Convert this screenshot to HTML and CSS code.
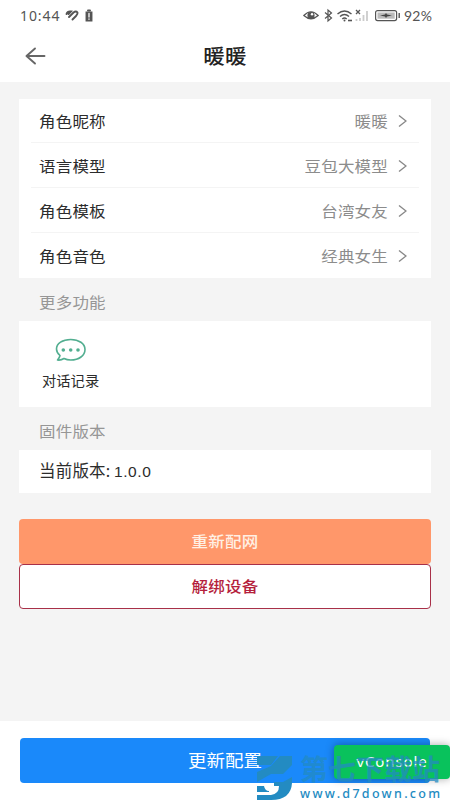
FILE: index.html
```html
<!DOCTYPE html>
<html lang="zh-CN">
<head>
<meta charset="utf-8">
<title>暖暖</title>
<link rel="stylesheet" href="styles.css">
</head>
<body>
<div class="status">
  <span class="time">10:44</span>
  <svg class="s-left" width="32" height="14" viewBox="0 0 32 14" fill="none" stroke="#555" stroke-width="1.9" stroke-linecap="round"><path d="M1.500 5Q2.500 2 6 2.500L3.500 5M4 8L8.500 3.500Q11 1.500 12.500 3.500Q13 5 11 7L7.500 10.500"/><path d="M21.500 3.500h5v8h-5z" fill="#555"/><path d="M23 1.500h2" stroke-width="2"/><path d="M24 4.500v3.500M24 10v.3" stroke="#fff" stroke-width="1.300"/></svg>
  <svg class="s-right" width="98" height="16" viewBox="0 0 98 16" fill="none" stroke="#555" stroke-width="1.200">
    <path d="M.8 7.500Q8 0 15.200 7.500Q8 14 .8 7.500Z"/><circle cx="8" cy="7.500" r="3" fill="#555"/><circle cx="9" cy="6.300" r="1.200" fill="#fff" stroke="none"/>
    <path d="M22 4.500l6.500 5.500-3.500 3V2l3.500 3L22 10.500"/>
    <path d="M34.500 6q7-6 14 0M37 8.500q4.500-4 9 0M39.300 11q2.200-2 4.400 0" stroke-width="1.400"/><circle cx="41.500" cy="12.500" r="1" fill="#555" stroke="none"/><path d="M45 12.500h4" stroke-width="1.600"/>
    <path d="M53 2l4 4M57 2l-4 4" stroke-width="1.300"/><path d="M53.500 13v-2M57 13v-3M60.500 13V7M64 13V3" stroke="#ccc" stroke-width="1.800"/>
    <rect x="72.600" y="2.600" width="21" height="10" rx="2"/><rect x="74.500" y="4.500" width="17.200" height="6.200" fill="#bbb" stroke="none"/><path d="M77 7.600l5-1 1-1.500 1 1.500 5 1-5 1-1 1.500-1-1.500z" fill="#444" stroke="none"/><path d="M96.200 5v5" stroke-width="1.400"/>
  </svg>
  <span class="pct">92%</span>
</div>
<header class="nav">
  <svg class="back" width="22" height="18" viewBox="0 0 22 18" fill="none" stroke="#666" stroke-width="1.900" stroke-linecap="round" stroke-linejoin="round"><path d="M19.500 9H1.500M10 1.500L1.500 9l8.500 7.500"/></svg>
  <h1>暖暖</h1>
</header>
<main>
  <section class="card list">
    <div class="row"><span>角色昵称</span><span class="value">暖暖</span><svg class="chev" viewBox="0 0 9 14"><path d="M1 1.500L8 7l-7 5.500"/></svg></div>
    <div class="row"><span>语言模型</span><span class="value">豆包大模型</span><svg class="chev" viewBox="0 0 9 14"><path d="M1 1.500L8 7l-7 5.500"/></svg></div>
    <div class="row"><span>角色模板</span><span class="value">台湾女友</span><svg class="chev" viewBox="0 0 9 14"><path d="M1 1.500L8 7l-7 5.500"/></svg></div>
    <div class="row"><span>角色音色</span><span class="value">经典女生</span><svg class="chev" viewBox="0 0 9 14"><path d="M1 1.500L8 7l-7 5.500"/></svg></div>
  </section>
  <h2>更多功能</h2>
  <section class="card features">
    <div class="feature">
      <svg width="32" height="24" viewBox="0 0 32 24"><path d="M5 17.500Q1.500 14.500 1.500 11C1.500 5.500 7.500 1.500 15.700 1.500S30 5.500 30 11.500 24 22 15.700 22Q12 22 9 20.500Q6 22.500 2.500 22Q4.500 20 5 17.500Z" fill="none" stroke="#52ae90" stroke-width="1.600" stroke-linejoin="round"/><g fill="#52ae90"><circle cx="8.300" cy="12" r="1.800"/><circle cx="15.700" cy="12" r="1.800"/><circle cx="23" cy="12" r="1.800"/></g></svg>
      <span>对话记录</span>
    </div>
  </section>
  <h2>固件版本</h2>
  <section class="card version">当前版本: <span class="num">1.0.0</span></section>
  <div class="btn net"><span>重新配网</span></div>
  <div class="btn unbind"><span>解绑设备</span></div>
</main>
<footer>
  <div class="btn update"><span>更新配置</span></div>
</footer>
<div class="vconsole">vConsole</div>
<div class="mark">
  <svg class="logo" width="46" height="47" viewBox="0 0 46 47"><path d="M0 3h21l-7 9H0zM14 13l9-10h12v9l-9 9H14L0 29V19zM0 33h7q1 5 5 5v1H0zM17 29h9l9-5v6q-1 17-21 17H0v-5h14q8-1 8-9h-5z" fill="#238bc2"/></svg>
  <div class="mark-text"><span class="mark-name">第七下载站</span><span class="mark-url">www.d7down.com</span></div>
</div>
</body>
</html>
```

FILE: styles.css
```css
* { box-sizing: border-box; }
body { margin: 0; width: 450px; height: 800px; overflow: hidden; position: relative; display: flex; flex-direction: column; background: #f4f4f4; color: #2c2c2c; font: 16.5px/24px "Noto Sans", "Noto Sans CJK SC", sans-serif; letter-spacing: .2px; }
svg { display: block; flex: none; }
.status { height: 32px; flex: none; background: #fff; display: flex; align-items: center; padding: 0 17px 0 20px; color: #555; letter-spacing: 0; }
.time { width: 42px; font: 14px/32px "Noto Sans", sans-serif; letter-spacing: .9px; }
.s-left { margin-left: 3px; }
.s-right { margin-left: auto; }
.pct { width: 29px; margin-left: 3px; font: 14px/32px Lato, sans-serif; letter-spacing: .2px; }
.nav { height: 50px; flex: none; background: #fff; display: flex; align-items: center; padding: 0 25px 2px; }
.nav h1 { flex: 1; margin: 2px 22px 0 0; text-align: center; font-size: 21.5px; font-weight: 500; line-height: 32px; color: #222; transform: scaleY(.93); }
main { flex: 1; padding: 17px 19px 0; }
.card { background: #fff; }
.list { height: 179px; }
.row { display: flex; align-items: center; height: 45px; margin: 0 12px; padding: 1px 12px 0 8px; border-bottom: 1px solid #f4f4f4; }
.row:first-child { height: 44px; }
.row:last-child { border: 0; }
.row span, .feature span, .btn span { transform: scaleY(.92); }
.value { margin-left: auto; color: #8c8c8c; }
.chev { width: 9px; height: 14px; margin-left: 10px; fill: none; stroke: #888; stroke-width: 1.4; }
h2 { margin: 0; padding: 13px 20px 6px; font-size: 16.5px; line-height: 24px; font-weight: 400; color: #969696; transform: scaleY(.92); }
.features { height: 86px; padding: 17px 22px; display: flex; }
.feature { display: flex; flex-direction: column; align-items: center; gap: 8px; font-size: 14.3px; line-height: 22px; letter-spacing: 0; padding-left: 1px; }
.version { height: 43px; padding: 0 20px; line-height: 42px; }
.num { font-family: "Liberation Sans", sans-serif; font-size: 15.5px; letter-spacing: .6px; margin-left: -1px; }
.btn { display: flex; align-items: center; justify-content: center; height: 45px; border-radius: 4px; }
.net { margin-top: 26px; background: #ff976a; color: #fff0e4; font-weight: 500; padding-bottom: 1px; }
.unbind { background: #fff; border: 1.5px solid #a83048; color: #b51f3d; font-weight: 500; padding-bottom: 1px; }
footer { height: 79px; flex: none; background: #fff; padding: 17px 20px; }
.update { background: #1a89fa; color: #fff; font-size: 18.5px; letter-spacing: 0; }
.vconsole { position: absolute; left: 334px; top: 745px; width: 116px; height: 34px; border-radius: 4px; background: #09c25c; color: #fff; font: 15px/33px "Noto Sans", sans-serif; letter-spacing: .9px; text-align: center; box-shadow: 0 0 8px rgba(0,0,0,.35); }
.mark { position: absolute; left: 257px; top: 753px; display: flex; color: #238bc2; letter-spacing: 0; }
.mark-text { display: flex; flex-direction: column; margin-left: -3px; }
.mark-name { font: 700 28px/30px "Noto Sans CJK SC", sans-serif; opacity: .75; white-space: nowrap; }
.mark-url { margin-top: 3px; font: 500 12.5px/16px "Noto Sans", sans-serif; letter-spacing: 2.3px; white-space: nowrap; }
```
